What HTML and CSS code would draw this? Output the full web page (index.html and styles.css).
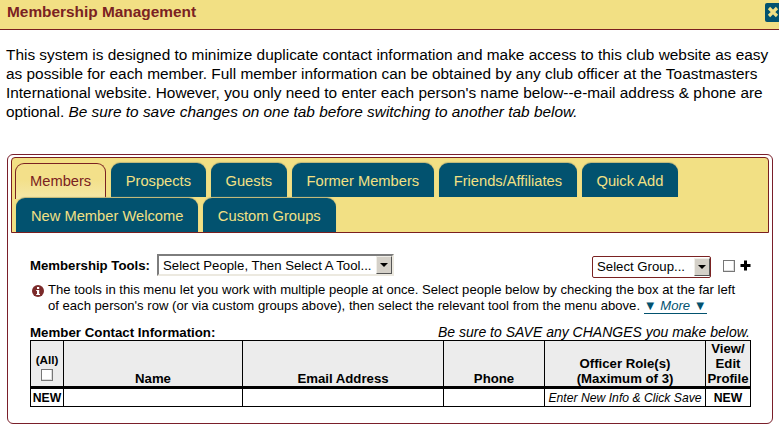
FILE: index.html
```html
<!DOCTYPE html>
<html lang="en">
<head>
  <meta charset="UTF-8" />
  <title>Membership Management</title>
  <link rel="stylesheet" href="styles.css">
</head>
<body>

  <div class="title-bar">
    <h1>Membership Management</h1>
    <button type="button" class="close-btn" aria-label="Close">
      <svg width="12" height="12" viewBox="0 0 12 12"><path d="M2 2 L10 10 M10 2 L2 10" stroke="#f2e084" stroke-width="3.2" /></svg>
    </button>
  </div>

  <p class="intro">This system is designed to minimize duplicate contact information and make access to this club website as easy as possible for each member. Full member information can be obtained by any club officer at the Toastmasters International website. However, you only need to enter each person's name below--e-mail address &amp; phone are optional. <em>Be sure to save changes on one tab before switching to another tab below.</em></p>

  <div class="card">
    <ul class="tabs">
      <li class="tab active">Members</li>
      <li class="tab">Prospects</li>
      <li class="tab">Guests</li>
      <li class="tab">Former Members</li>
      <li class="tab">Friends/Affiliates</li>
      <li class="tab">Quick Add</li>
      <li class="tab">New Member Welcome</li>
      <li class="tab">Custom Groups</li>
    </ul>

    <div class="panel">
      <div class="tools-row">
        <label class="tools-label">Membership Tools:</label>
        <div class="select select-tools">
          <span class="select-text">Select People, Then Select A Tool...</span>
          <span class="select-arrow"></span>
        </div>
        <div class="select select-group">
          <span class="select-text">Select Group...</span>
          <span class="select-arrow"></span>
        </div>
        <span class="check check-group"></span>
        <svg class="plus" width="11" height="11" viewBox="0 0 11 11"><path d="M5.5 0.5 V10.5 M0.5 5.5 H10.5" stroke="#000" stroke-width="3" /></svg>
      </div>

      <div class="info">
        <svg class="info-icon" width="12" height="12" viewBox="0 0 12 12">
          <circle cx="6" cy="6" r="6" fill="#7b2a2a" />
          <rect x="5" y="2" width="2.2" height="2" fill="#fff" />
          <path d="M4.2 5 H7.2 V9 H8 V10 H4.2 V9 H5 V6 H4.2 Z" fill="#fff" />
        </svg>
        <p>The tools in this menu let you work with multiple people at once. Select people below by checking the box at the far left of each person's row (or via custom groups above), then select the relevant tool from the menu above. <a class="more" href="#">▼ <em>More</em> ▼</a></p>
      </div>

      <div class="table-caption">
        <strong>Member Contact Information:</strong>
        <em>Be sure to SAVE any CHANGES you make below.</em>
      </div>

      <table class="members">
        <thead>
          <tr>
            <th class="col-all"><span class="all-label">(All)</span><span class="check"></span></th>
            <th class="col-name">Name</th>
            <th class="col-email">Email Address</th>
            <th class="col-phone">Phone</th>
            <th class="col-role">Officer Role(s)<br>(Maximum of 3)</th>
            <th class="col-view">View/<br>Edit<br>Profile</th>
          </tr>
        </thead>
        <tbody>
          <tr>
            <td class="new">NEW</td>
            <td></td>
            <td></td>
            <td></td>
            <td class="hint">Enter New Info &amp; Click Save</td>
            <td class="new">NEW</td>
          </tr>
        </tbody>
      </table>
    </div>
  </div>

</body>
</html>
```

FILE: styles.css
```css
* {
  margin: 0;
  padding: 0;
  box-sizing: border-box;
}

html, body {
  height: 439px;
  overflow: hidden;
}

body {
  font-family: "Liberation Sans", Arial, sans-serif;
  background: #fff;
  color: #000;
}

.title-bar {
  display: flex;
  justify-content: space-between;
  align-items: center;
  height: 30px;
  padding: 0 0 5px 7px;
  background: #f2e084;
  border-bottom: 1px solid #7a1f1f;
}

.title-bar h1 {
  font-size: 15.4px;
  font-weight: bold;
  color: #7a2222;
}

.close-btn {
  display: flex;
  align-items: center;
  justify-content: center;
  flex: none;
  width: 16px;
  height: 19px;
  margin-right: -2px;
  background: #02526f;
  border: none;
  border-radius: 2px;
}

.intro {
  margin: 15px 0 0 6px;
  width: 770px;
  font-size: 15.4px;
  line-height: 19px;
}

.card {
  margin: 33px 0 0 7px;
  width: 766px;
  height: 270px;
  padding: 2px 3px;
  border: 1px solid #7a1f2a;
  border-radius: 6px;
}

.tabs {
  display: flex;
  flex-wrap: wrap;
  column-gap: 4.5px;
  height: 76px;
  padding: 5px 0 0 3px;
  list-style: none;
  background: #f2e084;
  border: 1px solid #7a1f1f;
  border-radius: 4px 4px 0 0;
}

.tab {
  height: 34px;
  padding: 10px 15px 0;
  font-size: 14.7px;
  white-space: nowrap;
  color: #f2e084;
  background: #02526f;
  border-radius: 9px 9px 0 0;
  box-shadow: 0 -1px 1px #bdb67a;
}

.tab.active {
  height: 36px;
  color: #7a2222;
  background: linear-gradient(#f3e08a 0, #f3e08a 45%, #f5e8a8 100%);
  border: 1px solid #7a2222;
  border-bottom: none;
  box-shadow: none;
  padding: 9px 14px 0;
}

.tab:nth-child(7) {
  margin-left: 1px;
  margin-top: -2px;
  height: 34px;
}

.tab:nth-child(8) {
  margin-top: -2px;
}

.panel {
  padding: 20px 0 0 19px;
}

.tools-row {
  display: flex;
  align-items: center;
  height: 24px;
  font-size: 13.2px;
}

.tools-label {
  font-weight: bold;
  width: 127px;
}

.select {
  display: flex;
  align-items: center;
  justify-content: space-between;
  height: 22px;
  font-size: 13.2px;
  background: #fff;
}

.select-text {
  padding-left: 4px;
  white-space: nowrap;
}

.select-tools {
  width: 237px;
  border: 2px solid;
  border-color: #7d7d7d #ece9e0 #ece9e0 #7d7d7d;
}

.select-group {
  width: 119px;
  margin-left: 198px;
  margin-top: 3px;
  border: 1px solid #7a2222;
  border-radius: 2px;
}

.select-arrow {
  position: relative;
  flex: none;
  width: 16px;
  height: 18px;
  background: #d4d0c8;
  border: 1px solid;
  border-color: #f0eee8 #555 #555 #f0eee8;
}

.select-arrow::after {
  content: "";
  position: absolute;
  left: 3px;
  top: 6px;
  border-left: 4px solid transparent;
  border-right: 4px solid transparent;
  border-top: 4px solid #000;
}

.check {
  display: inline-block;
  width: 12px;
  height: 12px;
  background: #fff;
  border: 1px solid #777;
  box-shadow: inset -1px -1px 0 #ddd;
}

.check-group {
  margin-left: 12px;
  margin-top: 2px;
}

.plus {
  margin-left: 5px;
  margin-top: 1px;
}

.info {
  display: flex;
  gap: 4px;
  margin: 5px 0 0 2px;
  font-size: 13.1px;
  line-height: 16px;
}

.info-icon {
  flex: none;
  margin-top: 3px;
}

.info p {
  width: 700px;
}

.more {
  color: #02526f;
  text-decoration: none;
  border-bottom: 1px solid #02526f;
}

.table-caption {
  display: flex;
  justify-content: space-between;
  align-items: baseline;
  width: 720px;
  margin-top: 11px;
  font-size: 13.3px;
  line-height: 15px;
}

.table-caption em {
  font-size: 14px;
}

.members {
  width: 720px;
  table-layout: fixed;
  border-collapse: collapse;
  font-size: 13.2px;
}

.members th, .members td {
  border: 1px solid #000;
  text-align: center;
}

.members th {
  height: 46px;
  vertical-align: bottom;
  background: #ececec;
  line-height: 15px;
  border-bottom: 3px solid #000;
}

.members td {
  height: 19px;
  font-size: 12.2px;
}

.col-all { width: 33px; }
.col-name { width: 179px; }
.col-email { width: 201px; }
.col-phone { width: 101px; }
.col-role { width: 161px; }
.col-view { width: 45px; }

.col-all {
  font-size: 11.7px;
  vertical-align: top !important;
  padding-top: 12px;
}

.all-label {
  display: block;
  line-height: 14px;
}

.col-all .check {
  display: block;
  margin: 2px auto 0;
}

.members td.new {
  font-weight: bold;
}

.members td.hint {
  font-style: italic;
}
```
